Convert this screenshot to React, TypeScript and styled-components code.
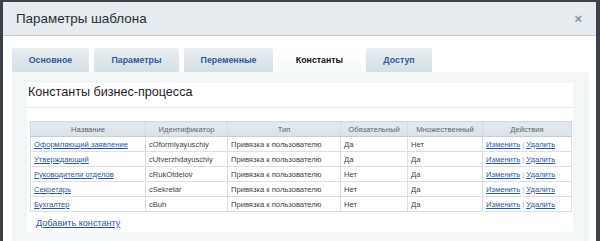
import React from 'react';
import styled, { createGlobalStyle } from 'styled-components';

const GlobalStyle = createGlobalStyle`
  html, body {
    margin: 0;
    padding: 0;
    background: #3b4147;
  }
  body {
    font-family: 'Liberation Sans', Arial, sans-serif;
  }
`;

type Row = {
  name: string;
  id: string;
  type: string;
  required: string;
  multiple: string;
};

const rows: Row[] = [
  { name: 'Оформляющий заявление', id: 'cOformlyayuschiy', type: 'Привязка к пользователю', required: 'Да', multiple: 'Нет' },
  { name: 'Утверждающий', id: 'cUtverzhdayuschiy', type: 'Привязка к пользователю', required: 'Да', multiple: 'Да' },
  { name: 'Руководители отделов', id: 'cRukOtdelov', type: 'Привязка к пользователю', required: 'Нет', multiple: 'Да' },
  { name: 'Секретарь', id: 'cSekretar', type: 'Привязка к пользователю', required: 'Нет', multiple: 'Да' },
  { name: 'Бухгалтер', id: 'cBuh', type: 'Привязка к пользователю', required: 'Нет', multiple: 'Да' },
];

const tabs = ['Основное', 'Параметры', 'Переменные', 'Константы', 'Доступ'];
const tabWidths = [77, 85, 89, 83, 66];

const App = () => {
  return (
    <>
      <GlobalStyle />
      <Page>
        <Dialog>
          <Header>
            <h1>Параметры шаблона</h1>
            <Close>×</Close>
          </Header>
          <Body>
            <Tabs>
              {tabs.map((t, i) => (
                <Tab key={t} $active={i === 3} style={{ width: tabWidths[i] }}>
                  {t}
                </Tab>
              ))}
            </Tabs>
            <Panel>
              <TitleBox>Константы бизнес-процесса</TitleBox>
              <ContentBox>
                <Table>
                  <colgroup>
                    <col style={{ width: 115 }} />
                    <col style={{ width: 82 }} />
                    <col style={{ width: 113 }} />
                    <col style={{ width: 67 }} />
                    <col style={{ width: 75 }} />
                    <col style={{ width: 89 }} />
                  </colgroup>
                  <thead>
                    <tr>
                      <th>Название</th>
                      <th>Идентификатор</th>
                      <th>Тип</th>
                      <th>Обязательный</th>
                      <th>Множественный</th>
                      <th>Действия</th>
                    </tr>
                  </thead>
                  <tbody>
                    {rows.map((r) => (
                      <tr key={r.id}>
                        <td><Link href="#">{r.name}</Link></td>
                        <td>{r.id}</td>
                        <td>{r.type}</td>
                        <td>{r.required}</td>
                        <td>{r.multiple}</td>
                        <td>
                          <Link href="#">Изменить</Link>
                          <Sep>|</Sep>
                          <Link href="#">Удалить</Link>
                        </td>
                      </tr>
                    ))}
                  </tbody>
                </Table>
                <AddLink href="#">Добавить константу</AddLink>
              </ContentBox>
            </Panel>
          </Body>
        </Dialog>
      </Page>
    </>
  );
};

export default App;

const Page = styled.div`
  height: 241px;
  overflow: hidden;
  padding: 2px 4px 0 3px;
  box-sizing: border-box;
`;

const Dialog = styled.div`
  background: #ffffff;
  height: 260px;
  border-radius: 2px 2px 0 0;
`;

const Header = styled.div`
  display: flex;
  align-items: center;
  justify-content: space-between;
  height: 33px;
  padding: 0 14px 0 13px;
  background: #e5ebef;
  border-bottom: 1px solid #c5ccd1;

  h1 {
    margin: 0;
    font-size: 13.4px;
    font-weight: normal;
    color: #2b2f33;
  }
`;

const Close = styled.span`
  font-size: 13px;
  font-weight: bold;
  color: #8a9298;
  line-height: 1;
`;

const Body = styled.div`
  padding: 12px 7px 0 9px;
`;

const Tabs = styled.div`
  display: flex;
  gap: 5px;
  height: 24px;
`;

const Tab = styled.div<{ $active?: boolean }>`
  display: flex;
  align-items: center;
  justify-content: center;
  box-sizing: border-box;
  height: 24px;
  font-size: 8.8px;
  font-weight: bold;
  color: ${(p) => (p.$active ? '#111' : '#2b5c9f')};
  background: ${(p) =>
    p.$active
      ? 'linear-gradient(#ffffff, #f6f8f9)'
      : 'linear-gradient(#e8eef1, #d5e0e5)'};
  border-radius: 2px 2px 0 0;
`;

const Panel = styled.div`
  background: #f3f6f7;
  padding: 11px 16px 0 15px;
  height: 200px;
`;

const TitleBox = styled.div`
  background: #ffffff;
  height: 25px;
  box-sizing: border-box;
  padding: 2px 0 0 1px;
  font-size: 12.6px;
  line-height: 15px;
  color: #1f2326;
  border-bottom: 1px solid #eceff1;
`;

const ContentBox = styled.div`
  background: #ffffff;
  padding: 13px 2px 0 3px;
  height: 111px;
`;

const Table = styled.table`
  border-collapse: collapse;
  table-layout: fixed;
  width: 541px;
  font-size: 7.6px;

  th {
    height: 14px;
    padding: 0 3px;
    font-weight: normal;
    color: #60666b;
    background: linear-gradient(#e4eaee, #dbe3e8);
    border: 1px solid #d3dbe1;
    border-bottom: 1px solid #c4ced5;
    text-align: center;
  }

  td {
    height: 14px;
    padding: 0 2px 0 3px;
    color: #3a3f44;
    border: 1px solid #d8dfe5;
    white-space: nowrap;
    overflow: hidden;
  }
`;

const Link = styled.a`
  color: #2a56a8;
  text-decoration: underline;
`;

const Sep = styled.span`
  color: #a8b0b6;
  margin: 0 2px;
`;

const AddLink = styled.a`
  display: inline-block;
  margin: 6px 0 0 6px;
  font-size: 9.1px;
  color: #2a56a8;
  text-decoration: underline;
`;
